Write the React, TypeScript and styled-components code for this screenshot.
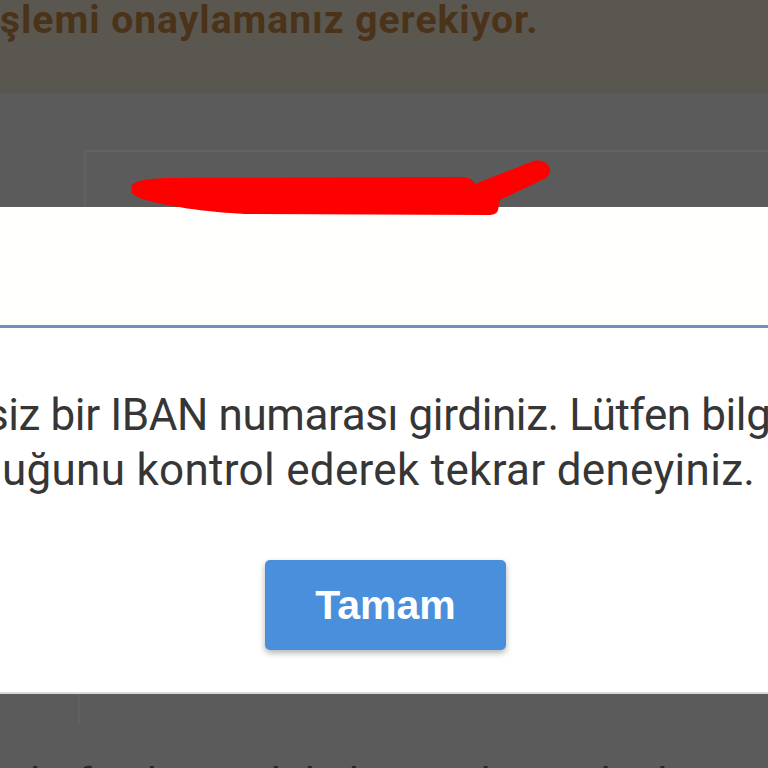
import React from "react";
import styled, { createGlobalStyle } from "styled-components";

const Global = createGlobalStyle`
  html, body { margin: 0; padding: 0; }
  body { width: 768px; height: 768px; overflow: hidden; background: #5b5b5b; }
  * { box-sizing: border-box; }
`;

const Page = styled.div`
  position: relative;
  width: 768px;
  height: 768px;
  overflow: hidden;
  background: #5b5b5b;
  display: flex;
  flex-direction: column;
`;

const Banner = styled.div`
  height: 93px;
  flex: none;
  background: #5a5650;
`;

const BannerText = styled.div`
  font-family: Roboto, "Liberation Sans", sans-serif;
  font-weight: 700;
  font-size: 39px;
  letter-spacing: 1px;
  line-height: 40px;
  color: #4b3319;
  white-space: nowrap;
`;

const Backdrop = styled.div`
  height: 114px;
  flex: none;
  padding: 57px 0 0 84px;
`;

const CardEdge = styled.div`
  height: 100%;
  border-left: 2px solid #616161;
  border-top: 2px solid #636363;
`;

const Modal = styled.div`
  height: 487px;
  flex: none;
  background: #ffffff;
  border-bottom: 2px solid #d9d9d9;
  display: flex;
  flex-direction: column;
`;

const ModalHeader = styled.div`
  height: 121px;
  flex: none;
  background: #fffffd;
  border-bottom: 3px solid #7190ba;
`;

const ModalBody = styled.div`
  padding-top: 60px;
  display: flex;
  flex-direction: column;
`;

const Line = styled.div<{ $indent: number; $spacing: number }>`
  font-family: Roboto, "Liberation Sans", sans-serif;
  font-size: 44px;
  letter-spacing: ${(p) => p.$spacing}px;
  line-height: 55px;
  color: #363636;
  white-space: nowrap;
  margin-left: ${(p) => p.$indent}px;
`;

const Button = styled.button`
  margin: 62px 0 0 265px;
  width: 241px;
  height: 90px;
  border: none;
  border-radius: 5px;
  background: #4a8fdb;
  color: #ffffff;
  font-family: "Liberation Sans", Arial, sans-serif;
  font-weight: 700;
  font-size: 41px;
  box-shadow: 0 3px 6px rgba(0, 0, 0, 0.3);
  padding: 0;
`;

const Bottom = styled.div`
  flex: 1;
  display: flex;
  flex-direction: column;
  padding-left: 78px;
`;

const BottomEdge = styled.div`
  height: 30px;
  flex: none;
  border-left: 2px solid #606060;
`;

const BottomText = styled.div`
  flex: none;
  margin-left: -78px;
  padding-left: 30px;
  margin-top: 39px;
  font-family: Roboto, "Liberation Sans", sans-serif;
  font-size: 42px;
  line-height: 42px;
  color: #262626;
  white-space: nowrap;
`;

const Scribble = styled.svg`
  position: absolute;
  left: 0;
  top: 0;
  pointer-events: none;
`;

export default function App() {
  return (
    <>
      <Global />
      <Page>
        <Banner>
          <BannerText>şlemi onaylamanız gerekiyor.</BannerText>
        </Banner>
        <Backdrop>
          <CardEdge />
        </Backdrop>
        <Modal>
          <ModalHeader />
          <ModalBody>
            <Line $indent={-14} $spacing={-0.4}>siz bir IBAN numarası girdiniz. Lütfen bilgilerinizin</Line>
            <Line $indent={2} $spacing={0.3}>uğunu kontrol ederek tekrar deneyiniz.</Line>
          </ModalBody>
          <Button>Tamam</Button>
        </Modal>
        <Bottom>
          <BottomEdge />
          <BottomText>lütfen hesap bilgilerinizi kontrol ediniz ve tekrar</BottomText>
        </Bottom>
        <Scribble width="768" height="768" viewBox="0 0 768 768">
          <path
            d="M 132 190 C 128 181, 145 178, 178 178 L 462 177 C 469 177, 473 180, 475 184 L 531 162 C 546 156, 556 170, 546 178 L 500 200 L 498 210 C 497 214, 493 215, 488 215 L 245 214 C 205 212, 165 206, 142 199 C 134 196, 130 193, 132 190 Z"
            fill="#ff0000"
          />
        </Scribble>
      </Page>
    </>
  );
}
